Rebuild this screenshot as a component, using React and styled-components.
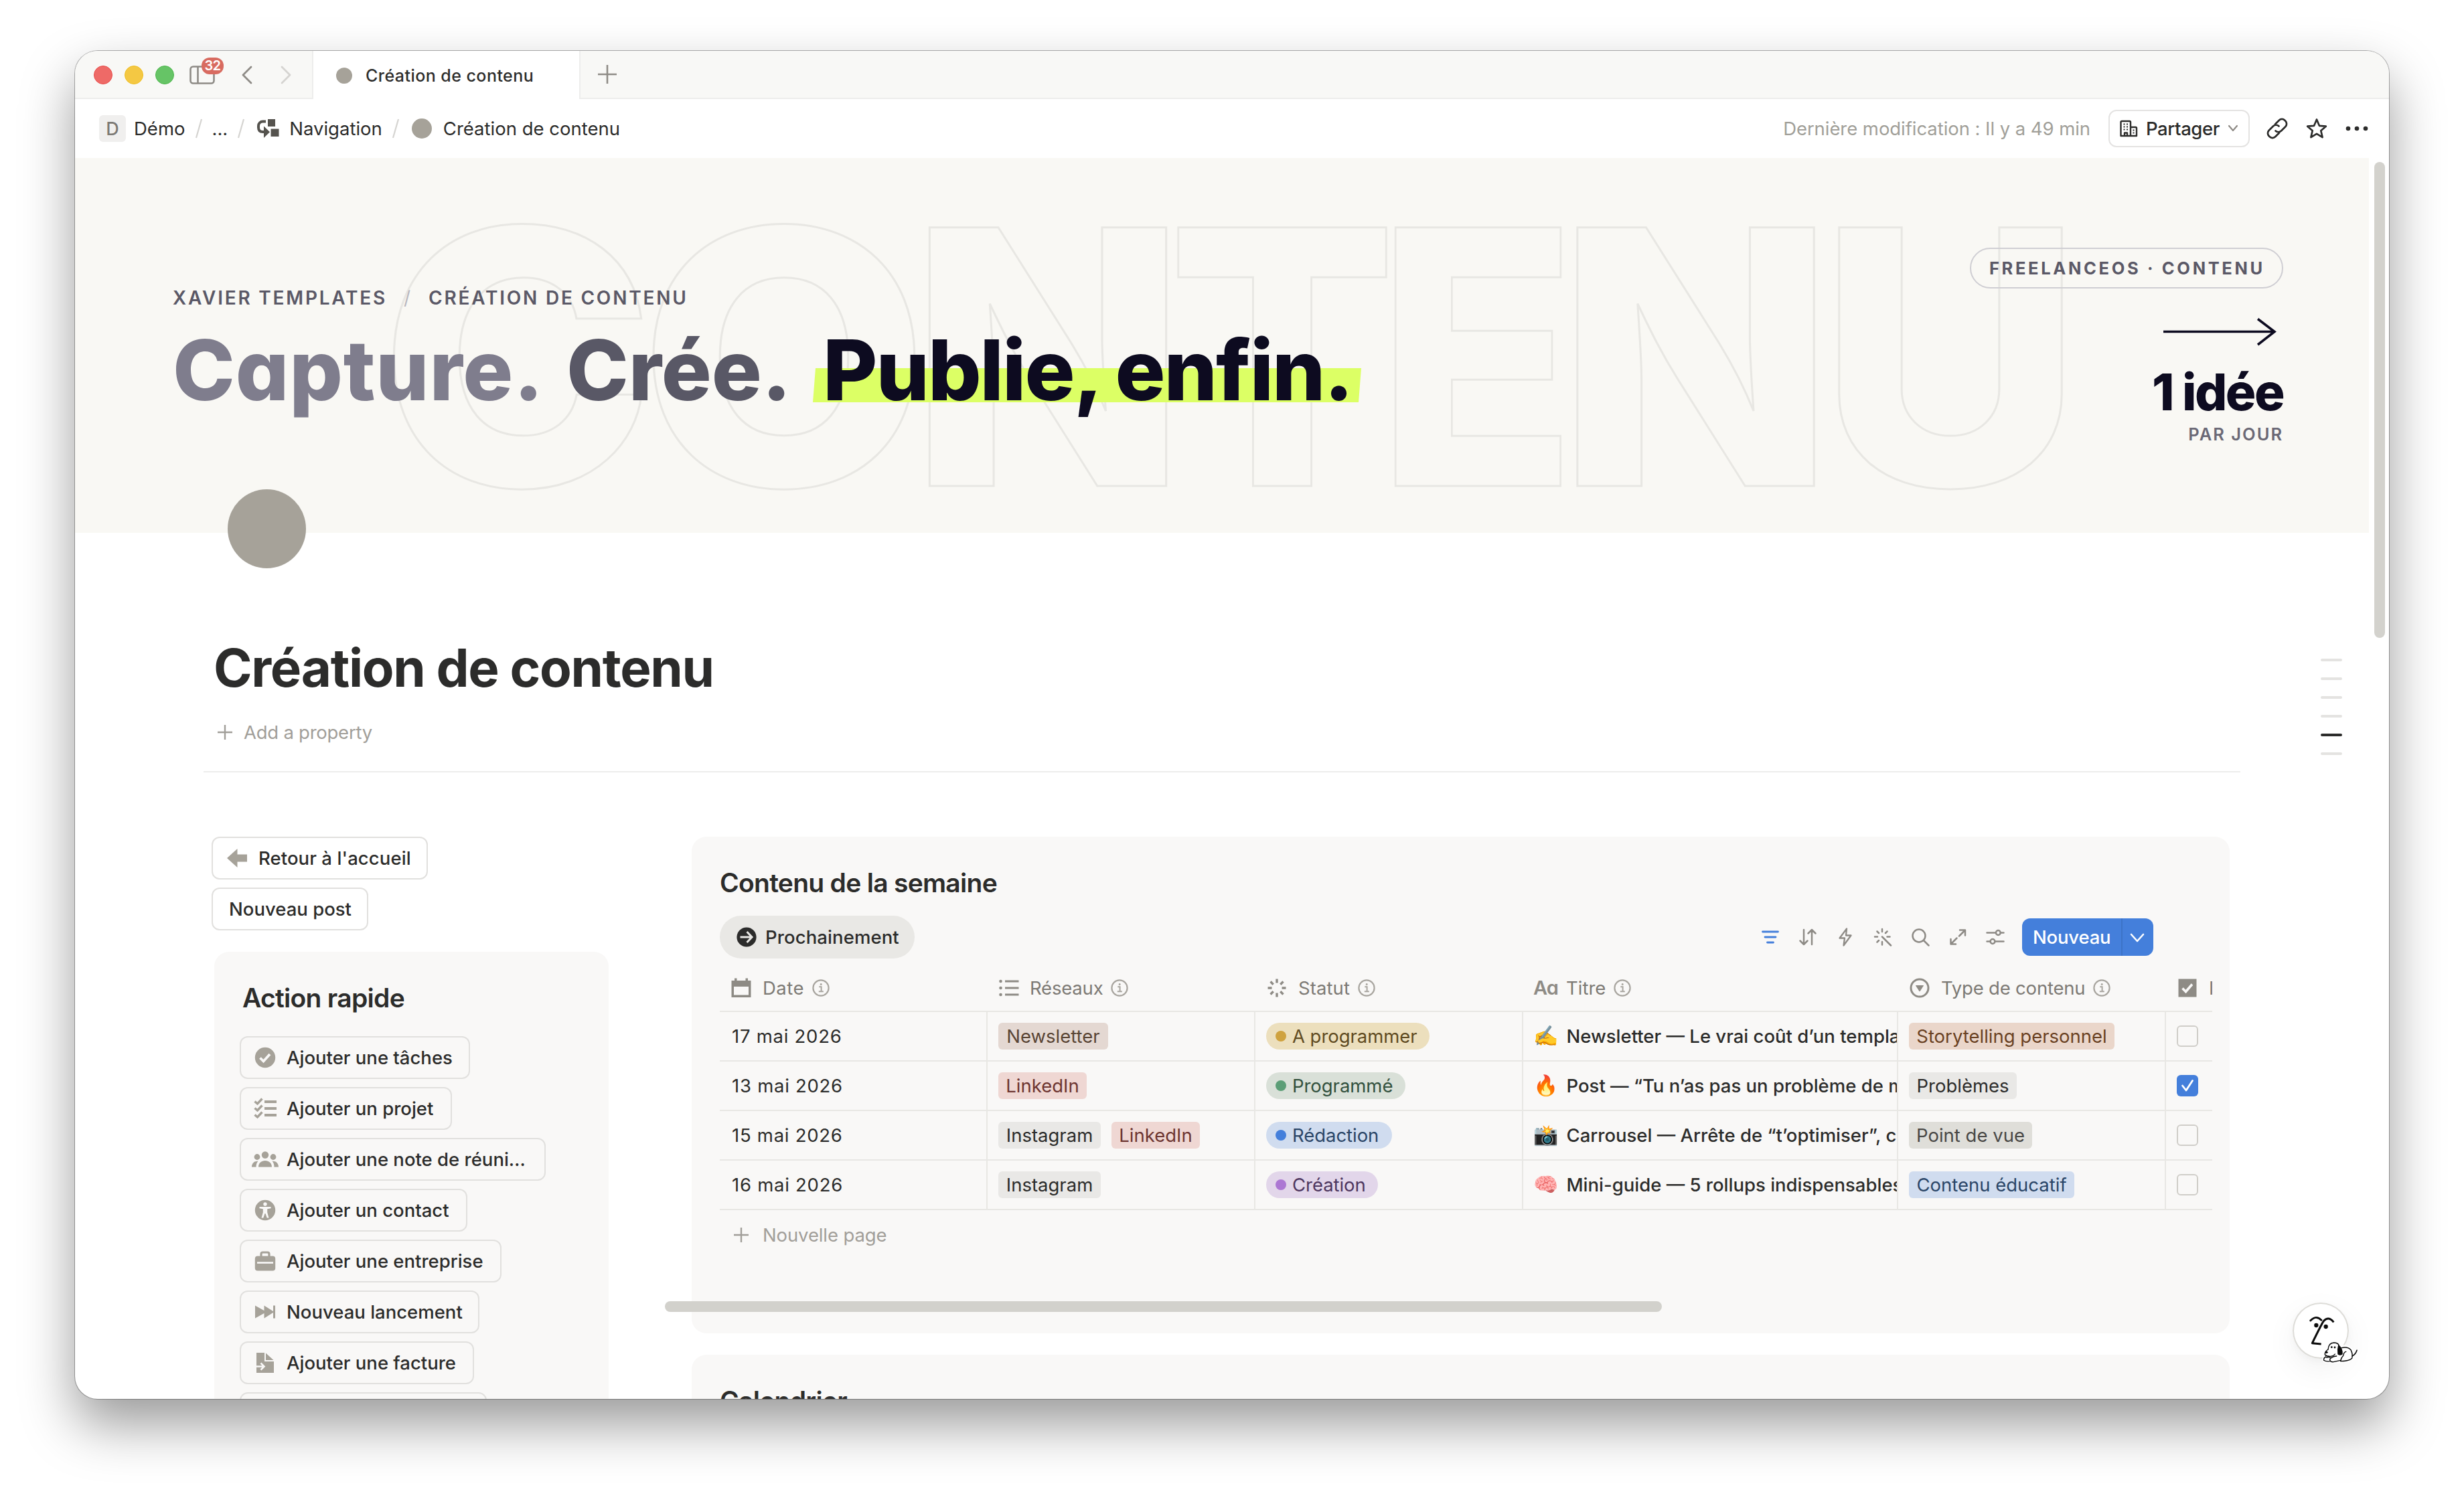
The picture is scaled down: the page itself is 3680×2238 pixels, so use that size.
import React from 'react';
import styled, { createGlobalStyle, css } from 'styled-components';

const INK = '#2c2c2b';
const MUTED = '#7d7a75';
const FAINT = '#a19e99';
const TAUPE = '#a6a299';
const PANEL = '#f9f8f7';
const BLUE = '#447fdb';

const GlobalStyle = createGlobalStyle`
  * { box-sizing: border-box; }
  body { margin: 0; background: #fff; font-family: Inter, "Liberation Sans", sans-serif; color: ${INK}; }
  svg { display: block; flex: none; }
`;

const Desktop = styled.div`
  width: 3680px;
  height: 2238px;
  padding: 76px 112px 148px;
  overflow: hidden;
  background: #fff;
`;

const Window = styled.main`
  position: relative;
  display: flex;
  flex-direction: column;
  height: 2014px;
  border-radius: 34px;
  background: #fff;
  box-shadow: 0 0 0 1px rgba(0, 0, 0, 0.3), 0 38px 80px rgba(0, 0, 0, 0.4);
`;

const Clip = styled.div`
  position: relative;
  display: flex;
  flex-direction: column;
  height: 100%;
  border-radius: 34px;
  overflow: hidden;
`;

/* ---------- tab strip ---------- */

const TabStrip = styled.div`
  flex: none;
  display: flex;
  height: 72px;
`;

const StripArea = styled.div`
  display: flex;
  align-items: center;
  background: #f8f8f6;
  border-bottom: 2px solid #ededec;
  ${(p) => (p.$grow
    ? css`flex: 1; border-left: 2px solid #ededec; padding-left: 26px;`
    : css`width: 356px; border-right: 2px solid #ededec; padding-left: 28px;`)}
`;

const Light = styled.span`
  width: 28px;
  height: 28px;
  margin: 2px 18px 0 0;
  border-radius: 50%;
  background: ${(p) => p.$color};
  border: 1.5px solid ${(p) => p.$ring};
`;

const SidebarToggle = styled.span`
  position: relative;
  margin: 2px 0 0 5px;
`;

const Badge = styled.span`
  position: absolute;
  left: 18px;
  top: -12px;
  width: 33px;
  height: 25px;
  border-radius: 12px;
  background: #d86b60;
  color: #fff;
  font-size: 20px;
  font-weight: 600;
  line-height: 25px;
  text-align: center;
  letter-spacing: -0.6px;
`;

const Chevrons = styled.span`
  display: flex;
  gap: 30px;
  margin: 2px 0 0 34px;
`;

const Tab = styled.div`
  display: flex;
  align-items: center;
  gap: 20px;
  width: 397px;
  padding: 2px 0 0 34px;
  background: #fff;
  font-size: 25px;
  font-weight: 500;
  letter-spacing: 0.45px;
`;

const Dot = styled.span`
  flex: none;
  width: ${(p) => p.$size}px;
  height: ${(p) => p.$size}px;
  border-radius: 50%;
  background: ${TAUPE};
`;

/* ---------- top bar ---------- */

const TopBar = styled.header`
  flex: none;
  display: flex;
  align-items: center;
  justify-content: space-between;
  height: 88px;
  padding: 0 31px 0 36px;
  font-size: 27.5px;
`;

const Crumbs = styled.nav`
  display: flex;
  align-items: center;
`;

const Initial = styled.span`
  width: 40px;
  height: 40px;
  margin-right: 12px;
  border-radius: 6px;
  background: #f0efee;
  color: ${MUTED};
  font-size: 27px;
  font-weight: 500;
  line-height: 41px;
  text-align: center;
`;

const Crumb = styled.span`
  margin-left: ${(p) => p.$ml || 0}px;
  white-space: nowrap;
`;

const Actions = styled.div`
  display: flex;
  align-items: center;
`;

const Edited = styled.span`
  margin-right: 27px;
  color: #a19f99;
  letter-spacing: -0.06px;
`;

const ShareButton = styled.button`
  display: flex;
  align-items: center;
  width: 211px;
  height: 56px;
  margin-right: 25px;
  padding: 0 0 0 15px;
  border: 2px solid #e4e3e2;
  border-radius: 12px;
  background: #fff;
  color: ${INK};
  font: 500 27.5px Inter, sans-serif;
  letter-spacing: -0.4px;
`;

const ShareLabel = styled.span`
  margin: 0 12px 0 11px;
`;

const IconSlot = styled.span`
  margin-left: ${(p) => p.$ml || 0}px;
`;

/* ---------- cover ---------- */

const Scroller = styled.div`
  position: relative;
  flex: 1;
  min-height: 0;
  padding-right: 30px;
  overflow: hidden;
`;

const Cover = styled.section`
  position: relative;
  display: flex;
  justify-content: space-between;
  height: 560px;
  padding: 0 128px 0 146px;
  background: #f9f8f4;
`;

const Watermark = styled.div`
  position: absolute;
  left: 472px;
  top: 17px;
  display: flex;
  font-size: 531px;
  font-weight: 850;
  line-height: 560px;
  color: transparent;
  -webkit-text-stroke: 3px #e8e7e3;
`;

const OutlineLetter = styled.span`
  display: flex;
  justify-content: center;
  width: ${(p) => p.$w}px;
  margin-right: ${(p) => p.$gap}px;
  transform: translateX(${(p) => p.$dx || 0}px) scaleX(${(p) => p.$sx});
`;

const CoverCopy = styled.div`
  position: relative;
  padding-top: 192px;
`;

const Eyebrow = styled.div`
  display: flex;
  height: 34px;
  font-size: 28px;
  font-weight: 600;
  line-height: 34px;
  letter-spacing: 2.78px;
  color: #5b5967;
  white-space: nowrap;
`;

const Slash = styled.span`
  width: 62px;
  padding-left: 25px;
  font-weight: 400;
  color: #b9b8bf;
`;

const Headline = styled.div`
  display: flex;
  margin-top: 26px;
  font-size: 125px;
  font-weight: 800;
  line-height: 130px;
  font-feature-settings: "cv11";
  white-space: nowrap;
`;

const Word = styled.span`
  position: relative;
  width: ${(p) => p.$w}px;
  padding-left: ${(p) => p.$pl || 0}px;
  color: ${(p) => p.$color};
  letter-spacing: ${(p) => p.$ls || 0}px;
  ${(p) => p.$marked && css`
    z-index: 0;
    &::before {
      content: '';
      position: absolute;
      z-index: -1;
      left: 0;
      right: 0;
      top: 62px;
      height: 51px;
      background: #dcff65;
      clip-path: polygon(4px 0, 100% 0, calc(100% - 4px) 100%, 0 100%);
    }
  `}
`;

const CoverAside = styled.div`
  position: relative;
  display: flex;
  flex-direction: column;
  align-items: flex-end;
  padding-top: 134px;
`;

const Pill = styled.span`
  width: 468px;
  height: 61px;
  margin-bottom: 44px;
  padding-left: 27px;
  border: 2.5px solid #cfced3;
  border-radius: 31px;
  color: #5b5967;
  font-size: 25.5px;
  font-weight: 700;
  line-height: 58px;
  letter-spacing: 3.64px;
  white-space: nowrap;
`;

const ArrowSlot = styled.span`
  margin-right: 10px;
`;

const Stat = styled.span`
  margin: 28px 0 0;
  font-size: 76px;
  font-weight: 800;
  line-height: 80px;
  letter-spacing: -2.56px;
  color: #0d0b20;
  white-space: nowrap;
`;

const StatUnit = styled.span`
  margin-top: 8px;
  font-size: 25.5px;
  font-weight: 600;
  line-height: 32px;
  letter-spacing: 1.98px;
  color: #6b6976;
`;

/* ---------- page ---------- */

const PageIcon = styled.div`
  position: relative;
  width: 117px;
  height: 118px;
  margin: -65px 0 0 228px;
  border-radius: 50%;
  background: ${TAUPE};
`;

const Title = styled.h1`
  margin: 101px 0 0 207px;
  font-size: 78px;
  font-weight: 720;
  line-height: 96px;
  letter-spacing: -1.35px;
`;

const AddProperty = styled.div`
  display: flex;
  align-items: center;
  gap: 17px;
  height: 40px;
  margin: 28px 0 0 213px;
  color: ${FAINT};
  font-size: 27.5px;
  letter-spacing: -0.25px;
`;

const Divider = styled.hr`
  height: 2px;
  margin: 38px 192px 96px;
  border: 0;
  background: #ededec;
`;

const Columns = styled.div`
  display: flex;
  align-items: flex-start;
  gap: 124px;
  padding-left: 208px;
`;

const SideColumn = styled.aside`
  display: flex;
  flex-direction: column;
  width: 589px;
`;

const ButtonStack = styled.div`
  display: flex;
  flex-direction: column;
  gap: 12px;
  margin: ${(p) => p.$m || '0'};
`;

const OutlineButton = styled.button`
  display: flex;
  align-items: center;
  gap: ${(p) => p.$gap || 14}px;
  width: ${(p) => p.$w}px;
  height: 64px;
  padding: 0 0 0 ${(p) => (p.$plain ? 24 : 18)}px;
  border: 2px solid #e1e0de;
  border-radius: 12px;
  background: transparent;
  color: ${INK};
  font: 500 27.5px Inter, sans-serif;
  letter-spacing: ${(p) => p.$ls || 0}px;
  white-space: nowrap;
`;

const IconCell = styled.span`
  display: flex;
  align-items: center;
  justify-content: center;
  width: 36px;
  height: 36px;
`;

const Panel = styled.section`
  position: relative;
  height: ${(p) => p.$h}px;
  padding: 43px 0 0 ${(p) => p.$pl}px;
  border-radius: 22px;
  background: ${PANEL};
`;

const MainColumn = styled.div`
  display: flex;
  flex-direction: column;
  gap: 32px;
  width: 2297px;
`;

const Heading = styled.h2`
  margin: 0 0 0 ${(p) => p.$ml || 0}px;
  font-size: 39px;
  font-weight: 640;
  line-height: 52px;
  letter-spacing: -0.72px;
`;

/* ---------- database ---------- */

const Toolbar = styled.div`
  display: flex;
  align-items: center;
  justify-content: space-between;
  width: 2141px;
  height: 64px;
  margin-top: 23px;
`;

const ViewTab = styled.span`
  display: flex;
  align-items: center;
  gap: 13px;
  width: 291px;
  height: 64px;
  padding-left: 25px;
  border-radius: 32px;
  background: #e9e8e5;
  font-size: 27.5px;
  font-weight: 500;
  letter-spacing: 0.1px;
`;

const Tools = styled.div`
  display: flex;
  align-items: center;
  gap: 28px;
`;

const NewButton = styled.button`
  display: flex;
  align-items: center;
  width: 196px;
  height: 56px;
  margin-left: -2px;
  padding: 0;
  border: 0;
  border-radius: 12px;
  background: ${BLUE};
  color: #fff;
  font: 500 27.5px Inter, sans-serif;
  letter-spacing: -0.2px;
`;

const NewLabel = styled.span`
  width: 150px;
  height: 56px;
  border-right: 2px solid #3d73c7;
  padding-left: 16px;
  line-height: 56px;
  text-align: left;
`;

const NewCaret = styled.span`
  padding: 2px 0 0 11px;
`;

const Table = styled.div`
  width: 2229px;
  margin-top: 10px;
  overflow: hidden;
`;

const Row = styled.div`
  display: grid;
  grid-template-columns: 400px 400px 400px 560px 400px 69px;
  height: ${(p) => (p.$head ? 70 : 74)}px;
  border-bottom: 2px solid #e8e7e4;
`;

const HeadCell = styled.div`
  display: flex;
  align-items: center;
  padding-left: ${(p) => p.$pl || 17}px;
  color: ${MUTED};
  font-size: 27.5px;
  white-space: nowrap;
  overflow: hidden;
`;

const HeadIcon = styled.span`
  width: ${(p) => p.$w || 46}px;
  flex: none;
`;

const HeadLabel = styled.span`
  margin-right: 12px;
  letter-spacing: ${(p) => p.$ls || 0}px;
`;

const AaGlyph = styled.span`
  width: 49px;
  flex: none;
  color: #8e8b85;
  font-size: 29px;
  font-weight: 600;
  letter-spacing: -1px;
  line-height: 30px;
  font-feature-settings: "cv11";
`;

const Cell = styled.div`
  display: flex;
  align-items: center;
  gap: 16px;
  min-width: 0;
  padding-left: 16px;
  border-right: ${(p) => (p.$last ? 0 : 2)}px solid #e8e7e4;
  overflow: hidden;
  white-space: nowrap;
  font-size: 27.5px;
`;

const DateText = styled.span`
  padding-left: 2px;
  letter-spacing: 0.74px;
`;

const TONES = {
  brown: ['#e4d8d2', '#5a4535'],
  red: ['#efd7d3', '#6d3531'],
  plain: ['#e9e8e6', '#2c2c2b'],
  gray: ['#dfded9', '#494846'],
  orange: ['#ead6ca', '#6a4224'],
  yellow: ['#ecdfbd', '#604b22', '#cfa23f'],
  green: ['#d9e0d8', '#33513e', '#5c9e77'],
  blue: ['#d0dcef', '#2b4668', '#447fdb'],
  purple: ['#e2d6ea', '#4e365f', '#ac77d3'],
};

const Tag = styled.span`
  flex: none;
  width: ${(p) => p.$w}px;
  height: 40px;
  border-radius: 6px;
  background: ${(p) => TONES[p.$tone][0]};
  color: ${(p) => TONES[p.$tone][1]};
  line-height: 40px;
  text-align: center;
`;

const Status = styled.span`
  display: flex;
  align-items: center;
  width: ${(p) => p.$w}px;
  height: 40px;
  padding-left: 14px;
  border-radius: 20px;
  background: ${(p) => TONES[p.$tone][0]};
  color: ${(p) => TONES[p.$tone][1]};
  letter-spacing: -0.05px;
  &::before {
    content: '';
    width: 16px;
    height: 16px;
    margin-right: 9px;
    border-radius: 50%;
    background: ${(p) => TONES[p.$tone][2]};
  }
`;

const TitleText = styled.span`
  display: flex;
  align-items: center;
  margin-left: -1px;
  font-weight: 500;
`;

const Emoji = styled.span`
  width: 49.5px;
  flex: none;
  font-family: "Noto Color Emoji", sans-serif;
  font-size: 30px;
  line-height: 40px;
`;

const Checkbox = styled.span`
  display: flex;
  align-items: center;
  justify-content: center;
  flex: none;
  width: 32px;
  height: 32px;
  border-radius: 6px;
  ${(p) => (p.$on ? css`background: ${BLUE};` : css`border: 2px solid #d0cec9;`)}
`;

const NewRow = styled.div`
  display: flex;
  align-items: center;
  gap: 21px;
  height: 74px;
  padding-left: 21px;
  color: ${FAINT};
  font-size: 27.5px;
  letter-spacing: -0.12px;
`;

const HorizontalThumb = styled.span`
  position: absolute;
  left: -40px;
  top: 694px;
  width: 1489px;
  height: 16px;
  border-radius: 8px;
  background: #d2d1cc;
`;

/* ---------- floating ---------- */

const VerticalThumb = styled.span`
  position: absolute;
  right: 6px;
  top: 6px;
  width: 16px;
  height: 711px;
  border-radius: 8px;
  background: #d3d2cd;
`;

const Outline = styled.div`
  position: absolute;
  right: 70px;
  top: 748px;
  display: flex;
  flex-direction: column;
  gap: 24px;
`;

const OutlineMark = styled.span`
  width: 32px;
  height: 4px;
  border-radius: 2px;
  background: ${(p) => (p.$active ? INK : '#e4e3e1')};
`;

const Assistant = styled.div`
  position: absolute;
  left: 3312px;
  top: 1710px;
  width: 84px;
  height: 84px;
  border-radius: 50%;
  background: #fff;
  box-shadow: inset 0 0 0 2px #dddcd8, 0 16px 48px rgba(0, 0, 0, 0.06), 0 4px 12px rgba(0, 0, 0, 0.03);
`;

/* ---------- icons ---------- */

const Plus = ({ size, color, w = 2.6 }) => (
  <svg width={size} height={size} viewBox="0 0 24 24" stroke={color} strokeWidth={w * 24 / size}>
    <path d="M12 0V24M0 12H24" />
  </svg>
);

const SidebarIcon = () => (
  <svg width="38" height="28" viewBox="0 0 38 28" fill="none" stroke="#8e8b86" strokeWidth="2.6">
    <rect x="1.5" y="1.5" width="35" height="25" rx="4" />
    <path d="M12.5 1.5v25" />
  </svg>
);

const Chevron = ({ flip, color }) => (
  <svg width="28" height="28" viewBox="0 0 28 28" fill="none" stroke={color} strokeWidth="2.8" strokeLinecap="round" strokeLinejoin="round">
    <path d={flip ? 'M8 2l12 12L8 26' : 'M20 2L8 14l12 12'} />
  </svg>
);

const CrumbSlash = () => (
  <svg width="10" height="30" viewBox="0 0 10 30" stroke="#d5d4d1" strokeWidth="2.2"><path d="M9 1L1 29" /></svg>
);

const NavigationIcon = () => (
  <svg width="34" height="30" viewBox="0 0 34 30" fill="#55534e">
    <rect x="17" y="1" width="11" height="11" />
    <rect x="21.5" y="15.5" width="12" height="11.5" />
    <path d="M14 4.500H9.500A6.500 6.500 0 0 0 3 11v2.500Q3 20 9.500 20H13" fill="none" stroke="#55534e" strokeWidth="4" />
    <path d="M11 11.500L20 20.200 11 29z" />
  </svg>
);

const BuildingIcon = () => (
  <svg width="28" height="26" viewBox="0 0 28 26" fill="none" stroke={INK} strokeWidth="2.4" strokeLinejoin="round">
    <path d="M1.500 24V3.500Q1.500 2 3 2H14.500Q16 2 16 3.500V24zM16 11h7.500Q25 11 25 12.500V24H16M7 24v-4.500h4V24" />
    <path d="M5.500 6.500h2M10 6.500h2M5.500 10.500h2M10 10.500h2M5.500 14.500h2M10 14.500h2M19.500 15.500h2M19.500 19.500h2" strokeWidth="2" />
  </svg>
);

const Caret = ({ size, color, w }) => (
  <svg width={size} height={size / 2 + 4} viewBox={`0 0 ${size} ${size / 2 + 4}`} fill="none" stroke={color} strokeWidth={w} strokeLinecap="round" strokeLinejoin="round">
    <path d={`M2 2L${size / 2} ${size / 2 + 1}L${size - 2} 2`} />
  </svg>
);

const LinkIcon = () => (
  <svg width="32" height="32" viewBox="0 0 32 32" fill="none" stroke={INK} strokeWidth="2.7" strokeLinecap="round">
    <path d="M13 9.500l5.800-5.800a6 6 0 0 1 8.500 0l1 1a6 6 0 0 1 0 8.500L22 19.500a6 6 0 0 1-8.500 0" />
    <path d="M19 22.500l-5.800 5.800a6 6 0 0 1-8.500 0l-1-1a6 6 0 0 1 0-8.500L10 12.500a6 6 0 0 1 8.500 0" />
  </svg>
);

const StarIcon = () => (
  <svg width="32" height="32" viewBox="0 0 32 32" fill="none" stroke={INK} strokeWidth="2.700" strokeLinejoin="round">
    <path d="M16 2.500l3.900 9.300 9.900.9-7.500 6.600 2.300 9.800L16 23.900l-8.600 5.200 2.300-9.800-7.500-6.600 9.900-.9z" />
  </svg>
);

const DotsIcon = () => (
  <svg width="34" height="8" viewBox="0 0 34 8" fill={INK}>
    <circle cx="4" cy="4" r="3.300" /><circle cx="17" cy="4" r="3.300" /><circle cx="30" cy="4" r="3.300" />
  </svg>
);

const LongArrow = () => (
  <svg width="172" height="42" viewBox="0 0 172 42" fill="none" stroke="#0d0b20" strokeWidth="3.600">
    <path d="M3 20.500H168M144 1.500L169 20.500 144 40" />
  </svg>
);

const BackArrow = () => (
  <svg width="30" height="30" viewBox="0 0 30 30" fill={TAUPE}><path d="M0 15L15.500 1V9.500H30V20.500H15.500V29z" /></svg>
);

const CheckCircle = () => (
  <svg width="32" height="32" viewBox="0 0 32 32">
    <circle cx="16" cy="16" r="15.200" fill={TAUPE} />
    <path d="M8.500 16.500l5 5 9.500-10.500" fill="none" stroke={PANEL} strokeWidth="3.800" />
  </svg>
);

const Checklist = () => (
  <svg width="34" height="32" viewBox="0 0 34 32" fill="none" stroke={TAUPE}>
    <path d="M1.500 5.500l4 3.500 7-7.500M1.500 15.500l4 3.500 7-7.500M1.500 25.500l4 3.500 7-7.500" strokeWidth="3.400" />
    <path d="M16 6h18M16 16h18M16 26h18" strokeWidth="3.800" />
  </svg>
);

const People = () => (
  <svg width="40" height="24" viewBox="0 0 40 24" fill={TAUPE}>
    <circle cx="20" cy="5.500" r="5.200" /><circle cx="8" cy="8.500" r="4.400" /><circle cx="32" cy="8.500" r="4.400" />
    <path d="M10 23.500c0-6 4.500-9.500 10-9.500s10 3.500 10 9.500zM0 23.500c0-5.500 3.500-9 9.500-8.700-2 2.200-3 5-3 8.700zM40 23.500c0-5.500-3.500-9-9.500-8.700 2 2.200 3 5 3 8.700z" />
  </svg>
);

const Contact = () => (
  <svg width="32" height="32" viewBox="0 0 32 32">
    <circle cx="16" cy="16" r="15.200" fill={TAUPE} />
    <g fill={PANEL}><circle cx="16" cy="7" r="2.700" /><path d="M7.500 11h17v2.200l-5.300 1v5l2.300 8.300h-2.800L16.500 21h-1l-2.200 6.500h-2.800l2.300-8.300v-5l-5.300-1z" /></g>
  </svg>
);

const Briefcase = () => (
  <svg width="32" height="30" viewBox="0 0 32 30">
    <path d="M10 8V4.500Q10 2 12.500 2h7Q22 2 22 4.500V8" fill="none" stroke={TAUPE} strokeWidth="3.200" />
    <rect x="0.800" y="7.500" width="30.400" height="22" rx="4" fill={TAUPE} />
    <path d="M4 17.500h24" stroke={PANEL} strokeWidth="2.600" />
  </svg>
);

const FastForward = () => (
  <svg width="32" height="20" viewBox="0 0 32 20" fill={TAUPE}><path d="M1 0.500L14.500 8V0.500L28 9V0.500h3v19h-3V11L14.500 19.500V12L1 19.500z" /></svg>
);

const Invoice = () => (
  <svg width="26" height="30" viewBox="0 0 26 30">
    <path d="M0 0H12V13H26V30H0zM14 0.500L25.500 11H14z" fill={TAUPE} />
    <path d="M0 20.500h10.500M6.500 15.500l5 5-5 5" fill="none" stroke={PANEL} strokeWidth="2.600" />
  </svg>
);

const GoCircle = () => (
  <svg width="30" height="30" viewBox="0 0 30 30">
    <circle cx="15" cy="15" r="14.600" fill={INK} />
    <path d="M5.500 15h17M15.500 7l7.500 8-7.500 8" fill="none" stroke="#e9e8e5" strokeWidth="3" />
  </svg>
);

const tool = { fill: 'none', stroke: '#8e8b86', strokeWidth: 2.5, strokeLinecap: 'round', strokeLinejoin: 'round', width: 28, height: 28, viewBox: '0 0 28 28' };
const FilterIcon = () => <svg {...tool} stroke={BLUE} strokeWidth="2.800"><path d="M2.500 6h23M6 14h16M9.500 22h9" /></svg>;
const SortIcon = () => <svg {...tool}><path d="M8 3v22M2.500 19.500L8 25l5.500-5.500M20 25V3M14.500 8.500L20 3l5.500 5.500" /></svg>;
const BoltIcon = () => <svg {...tool} strokeWidth="2.300"><path d="M16 1.500L5.500 15.500H13L11.500 26.500 22.500 11.500H15z" /></svg>;
const WandIcon = () => <svg {...tool}><path d="M13 13.500L26 26.500M13 2v4M13 21v4.500M2 13.500h4M20.500 13.500h4M5.500 5.500l2.500 2.500M20.500 5.500L18 8M5.500 21.500L8 19" /></svg>;
const SearchIcon = () => <svg {...tool}><circle cx="12" cy="12" r="9.500" /><path d="M19 19l7.500 7.500" /></svg>;
const ExpandIcon = () => <svg {...tool}><path d="M17 3.500h8v8M24.500 4L16 12.500M11 24.500H3.500V17M4 24L12.500 15.500" /></svg>;
const SlidersIcon = () => <svg {...tool}><path d="M1.500 7.500h13M22 7.500h4.500M1.500 20.500h5M14 20.500h12.500" /><circle cx="18.300" cy="7.500" r="3.400" /><circle cx="10" cy="20.500" r="3.400" /></svg>;

const HEAD = '#8e8b85';
const CalendarIcon = () => (
  <svg width="30" height="30" viewBox="0 0 30 30" fill={HEAD}>
    <path d="M0.500 4H5V0.500H8.500V4H21.500V0.500H25V4H29.500V29H0.500zM4 13V25.500H26V13z" fillRule="evenodd" />
  </svg>
);
const ListIcon = () => (
  <svg width="30" height="26" viewBox="0 0 30 26" stroke={HEAD}>
    <path d="M9 3H29.500M9 13H29.500M9 23H29.500" strokeWidth="3.200" />
    <path d="M2.500 3h.01M2.500 13h.01M2.500 23h.01" strokeWidth="4.600" strokeLinecap="round" />
  </svg>
);
const SpinnerIcon = () => (
  <svg width="28" height="28" viewBox="0 0 28 28" stroke={HEAD} strokeWidth="3.400">
    <path d="M14 0.500v6M14 21.500v6M0.500 14h6M21.500 14h6M4.500 4.500l4.200 4.200M19.300 19.300l4.200 4.200M23.500 4.500l-4.200 4.200M8.700 19.300l-4.200 4.200" />
  </svg>
);
const SelectIcon = () => (
  <svg width="30" height="30" viewBox="0 0 30 30"><circle cx="15" cy="15" r="13" fill="none" stroke={HEAD} strokeWidth="3" /><path d="M9.500 11.500h11L15 20z" fill={HEAD} stroke={HEAD} strokeLinejoin="round" /></svg>
);
const CheckHeadIcon = () => (
  <svg width="28" height="28" viewBox="0 0 28 28"><rect x="0.500" y="0.500" width="27" height="27" fill={HEAD} /><path d="M6.500 14.500l5 5 9.500-11" fill="none" stroke={PANEL} strokeWidth="3.600" /></svg>
);
const InfoIcon = () => (
  <svg width="26" height="26" viewBox="0 0 26 26" fill="none" stroke="#a8a59f" strokeWidth="2.200">
    <circle cx="13" cy="13" r="11.600" />
    <path d="M10.300 11.200H13.600V18M9.800 18.300H16.800" strokeWidth="2" /><circle cx="13.200" cy="7.600" r="1.500" fill="#a8a59f" stroke="none" />
  </svg>
);
const TickIcon = () => (
  <svg width="20" height="20" viewBox="0 0 20 20" fill="none" stroke="#fff" strokeWidth="2.800" strokeLinecap="round" strokeLinejoin="round"><path d="M2.500 10l5.500 7L17.500 2.500" /></svg>
);

const FaceAndDog = () => (
  <svg width="102" height="96" viewBox="193 198 306 288" fill="none" stroke="#0b0b0b" strokeLinecap="round" strokeLinejoin="round">
    <path d="M273 279Q298 252 322 277" strokeWidth="8.500" />
    <path d="M377 286Q354 257 332 281Q322 296 281 380L321 384" strokeWidth="9" strokeLinecap="butt" />
    <circle cx="299" cy="300" r="9.500" fill="#0b0b0b" stroke="none" />
    <circle cx="342" cy="306" r="9.500" fill="#0b0b0b" stroke="none" />
    <path d="M352 406Q354 380 378 378Q398 377 406 398Q440 392 454 408Q464 430 459 448Q448 460 408 462L372 464 340 461Q330 454 336 443L339 424z" fill="#fff" stroke="#fff" strokeWidth="16" />
    <g strokeWidth="4.200">
      <path d="M352 408Q354 379 378 378Q396 378 401 390" />
      <path d="M352 408Q336 419 338 432Q346 440 364 439Q378 437 383 429" />
      <path d="M412 401Q440 394 454 410Q464 430 459 448Q448 460 408 461" />
      <path d="M432 418Q422 420 420 436Q410 446 408 460" />
      <path d="M460 438Q476 430 481 412" strokeWidth="5" />
      <path d="M342 441Q331 446 333 457Q340 463 360 461M390 438Q368 440 360 452Q360 465 376 464L408 457M345 444Q356 440 364 446" />
      <path d="M399 390Q416 402 415 428Q407 436 397 429Q394 408 399 390z" fill="#0b0b0b" />
    </g>
    <g fill="#0b0b0b" stroke="none"><ellipse cx="345" cy="421" rx="6" ry="5" /><circle cx="368" cy="398" r="4.200" /><circle cx="382" cy="399" r="4.200" /></g>
  </svg>
);

/* ---------- data ---------- */

const WATERMARK = [
  ['C', 379, 10, 1.045, -1], ['O', 396, 20, 1.06, 0], ['N', 358, 11, 1.02, -3], ['T', 314, 11, 0.955, 0],
  ['E', 249, 24, 0.92, -2], ['N', 359, 31, 1.02, -3], ['U', 334, 0, 1.02, 0],
];

const QUICK_ACTIONS = [
  ['Ajouter une tâches', 344, CheckCircle],
  ['Ajouter un projet', 317, Checklist],
  ['Ajouter une note de réuni…', 457, People],
  ['Ajouter un contact', 340, Contact],
  ['Ajouter une entreprise', 391, Briefcase],
  ['Nouveau lancement', 358, FastForward],
  ['Ajouter une facture', 350, Invoice],
];

const ROWS = [
  { date: '17 mai 2026', nets: [['Newsletter', 'brown', 164]], status: ['A programmer', 'yellow', 244], emoji: '✍️', title: 'Newsletter — Le vrai coût d’un templa', type: ['Storytelling personnel', 'orange', 307] },
  { date: '13 mai 2026', nets: [['LinkedIn', 'red', 132]], status: ['Programmé', 'green', 208], emoji: '🔥', title: 'Post — “Tu n’as pas un problème de m', type: ['Problèmes', 'plain', 161], done: true },
  { date: '15 mai 2026', nets: [['Instagram', 'plain', 153], ['LinkedIn', 'red', 132]], status: ['Rédaction', 'blue', 188], emoji: '📸', title: 'Carrousel — Arrête de “t’optimiser”, c', type: ['Point de vue', 'gray', 184] },
  { date: '16 mai 2026', nets: [['Instagram', 'plain', 153]], status: ['Création', 'purple', 167], emoji: '🧠', title: 'Mini-guide — 5 rollups indispensables', type: ['Contenu éducatif', 'blue', 247] },
];

export default function App() {
  return (
    <Desktop>
      <GlobalStyle />
      <Window>
        <Clip>
          <TabStrip>
            <StripArea>
              <Light $color="#ee6a67" $ring="#e84c4a" />
              <Light $color="#f4c843" $ring="#eebd20" />
              <Light $color="#66c466" $ring="#4cb64b" />
              <SidebarToggle><SidebarIcon /><Badge>32</Badge></SidebarToggle>
              <Chevrons><Chevron color="#8e8b86" /><Chevron flip color="#d5d4d1" /></Chevrons>
            </StripArea>
            <Tab><Dot $size={24} />Création de contenu</Tab>
            <StripArea $grow><Plus size={28} color="#8e8b86" /></StripArea>
          </TabStrip>

          <TopBar>
            <Crumbs>
              <Initial>D</Initial>
              <Crumb>Démo</Crumb>
              <IconSlot $ml={16}><CrumbSlash /></IconSlot>
              <Crumb $ml={14}>...</Crumb>
              <IconSlot $ml={15}><CrumbSlash /></IconSlot>
              <IconSlot $ml={18}><NavigationIcon /></IconSlot>
              <Crumb $ml={15}>Navigation</Crumb>
              <IconSlot $ml={15}><CrumbSlash /></IconSlot>
              <IconSlot $ml={19}><Dot as="div" $size={30} /></IconSlot>
              <Crumb $ml={17}>Création de contenu</Crumb>
            </Crumbs>
            <Actions>
              <Edited>Dernière modification : Il y a 49 min</Edited>
              <ShareButton>
                <BuildingIcon />
                <ShareLabel>Partager</ShareLabel>
                <Caret size={16} color="#8e8b86" w={2.2} />
              </ShareButton>
              <LinkIcon />
              <IconSlot $ml={27}><StarIcon /></IconSlot>
              <IconSlot $ml={27}><DotsIcon /></IconSlot>
            </Actions>
          </TopBar>

          <Scroller>
            <Cover>
              <Watermark>
                {WATERMARK.map(([letter, w, gap, sx, dx], i) => (
                  <OutlineLetter key={i} $w={w} $gap={gap} $sx={sx} $dx={dx}>{letter}</OutlineLetter>
                ))}
              </Watermark>
              <CoverCopy>
                <Eyebrow>XAVIER TEMPLATES<Slash>/</Slash>CRÉATION DE CONTENU</Eyebrow>
                <Headline>
                  <Word $w={588} $color="#7f7d8d" $ls={0.8}>Capture.</Word>
                  <Word $w={368} $color="#595866" $ls={-0.1}>Crée.</Word>
                  <Word $w={819} $pl={15} $color="#0d0b20" $ls={-2}  $marked>Publie, enfin.</Word>
                </Headline>
              </CoverCopy>
              <CoverAside>
                <Pill>FREELANCEOS · CONTENU</Pill>
                <ArrowSlot><LongArrow /></ArrowSlot>
                <Stat>1 idée</Stat>
                <StatUnit>PAR JOUR</StatUnit>
              </CoverAside>
            </Cover>

            <PageIcon />
            <Title>Création de contenu</Title>
            <AddProperty><Plus size={22} color={FAINT} w={2.4} />Add a property</AddProperty>
            <Divider />

            <Columns>
              <SideColumn>
                <ButtonStack $m="0 0 32px -4px">
                  <OutlineButton $w={323} $ls={0.08}><IconCell><BackArrow /></IconCell>Retour à l'accueil</OutlineButton>
                  <OutlineButton $w={234} $plain>Nouveau post</OutlineButton>
                </ButtonStack>
                <Panel $h={720} $pl={38}>
                  <Heading $ml={4}>Action rapide</Heading>
                  <ButtonStack $m="31px 0 0">
                    {QUICK_ACTIONS.map(([label, w, Icon]) => (
                      <OutlineButton key={label} $w={w}><IconCell><Icon /></IconCell>{label}</OutlineButton>
                    ))}
                    <OutlineButton $w={369} />
                  </ButtonStack>
                </Panel>
              </SideColumn>

              <MainColumn>
                <Panel $h={742} $pl={42}>
                  <Heading>Contenu de la semaine</Heading>
                  <Toolbar>
                    <ViewTab><GoCircle />Prochainement</ViewTab>
                    <Tools>
                      <FilterIcon /><SortIcon /><BoltIcon /><WandIcon /><SearchIcon /><ExpandIcon /><SlidersIcon />
                      <NewButton><NewLabel>Nouveau</NewLabel><NewCaret><Caret size={22} color="#fff" w={2.6} /></NewCaret></NewButton>
                    </Tools>
                  </Toolbar>
                  <Table>
                    <Row $head>
                      <HeadCell><HeadIcon $w={47}><CalendarIcon /></HeadIcon><HeadLabel $ls={0.5}>Date</HeadLabel><InfoIcon /></HeadCell>
                      <HeadCell><HeadIcon><ListIcon /></HeadIcon><HeadLabel $ls={-0.2}>Réseaux</HeadLabel><InfoIcon /></HeadCell>
                      <HeadCell $pl={18}><HeadIcon>{<SpinnerIcon />}</HeadIcon><HeadLabel $ls={0.1}>Statut</HeadLabel><InfoIcon /></HeadCell>
                      <HeadCell $pl={15}><AaGlyph>Aa</AaGlyph><HeadLabel>Titre</HeadLabel><InfoIcon /></HeadCell>
                      <HeadCell><HeadIcon $w={47}><SelectIcon /></HeadIcon><HeadLabel $ls={-0.2}>Type de contenu</HeadLabel><InfoIcon /></HeadCell>
                      <HeadCell $pl={18}><HeadIcon><CheckHeadIcon /></HeadIcon>I</HeadCell>
                    </Row>
                    {ROWS.map((r) => (
                      <Row key={r.date}>
                        <Cell><DateText>{r.date}</DateText></Cell>
                        <Cell>{r.nets.map(([label, tone, w]) => <Tag key={label} $tone={tone} $w={w}>{label}</Tag>)}</Cell>
                        <Cell><Status $tone={r.status[1]} $w={r.status[2]}>{r.status[0]}</Status></Cell>
                        <Cell><TitleText><Emoji>{r.emoji}</Emoji>{r.title}</TitleText></Cell>
                        <Cell><Tag $tone={r.type[1]} $w={r.type[2]}>{r.type[0]}</Tag></Cell>
                        <Cell $last><Checkbox $on={r.done}>{r.done && <TickIcon />}</Checkbox></Cell>
                      </Row>
                    ))}
                  </Table>
                  <NewRow><Plus size={22} color={FAINT} w={2.4} />Nouvelle page</NewRow>
                  <HorizontalThumb />
                </Panel>
                <Panel $h={400} $pl={42}>
                  <Heading>Calendrier</Heading>
                </Panel>
              </MainColumn>
            </Columns>

            <VerticalThumb />
            <Outline>
              {[0, 1, 2, 3, 4, 5].map((i) => <OutlineMark key={i} $active={i === 4} />)}
            </Outline>
            <Assistant><FaceAndDog /></Assistant>
          </Scroller>
        </Clip>
      </Window>
    </Desktop>
  );
}
